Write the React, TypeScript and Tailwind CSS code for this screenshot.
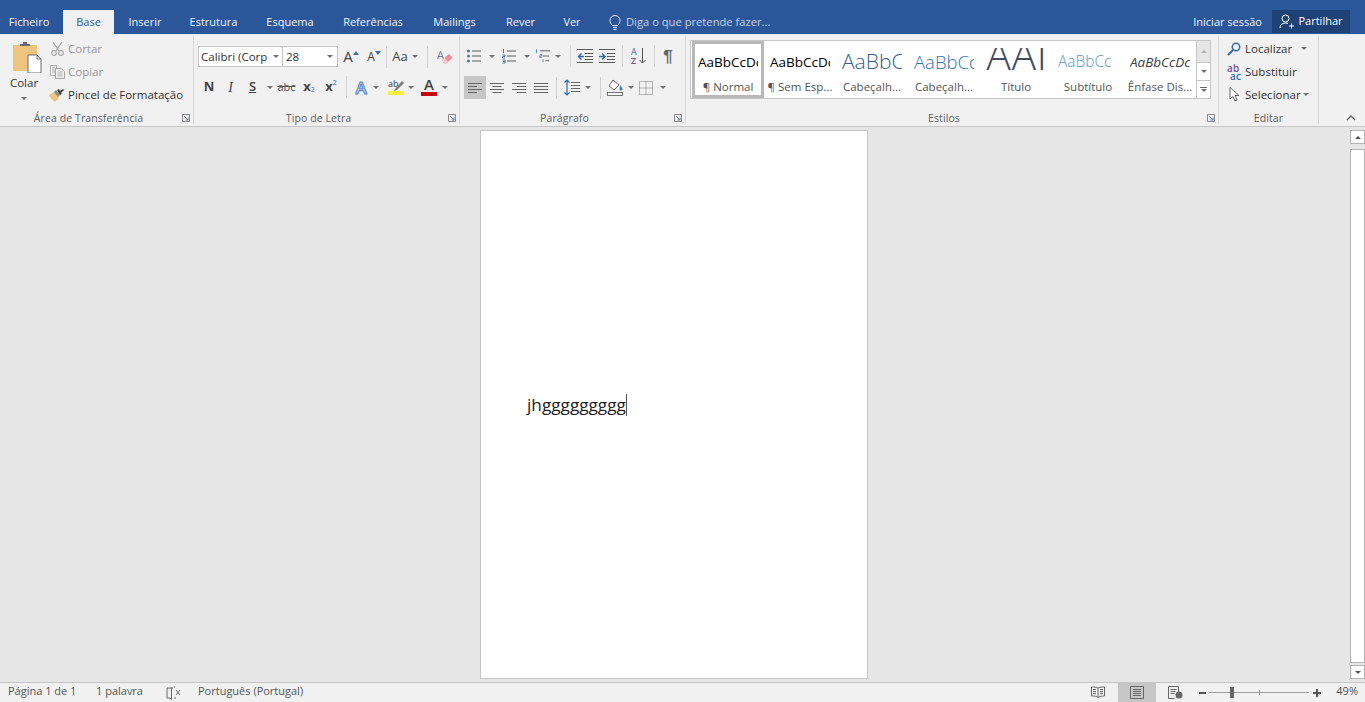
import type { ReactNode } from 'react';

const tabs = [
  { label: 'Ficheiro', w: 'w-[58px]' },
  { label: 'Base', w: 'w-[51px] ml-[5px]', active: true },
  { label: 'Inserir', w: 'w-[62px]' },
  { label: 'Estrutura', w: 'w-[75px]' },
  { label: 'Esquema', w: 'w-[78px]' },
  { label: 'Referências', w: 'w-[88px]' },
  { label: 'Mailings', w: 'w-[75px]' },
  { label: 'Rever', w: 'w-[57px]' },
  { label: 'Ver', w: 'w-[46px]' },
];

function Caret({ className = 'text-[#707070]' }: { className?: string }) {
  return (
    <svg width="6" height="3" viewBox="0 0 6 3" className={`shrink-0 ${className}`}>
      <path d="M0 0h6L3 3z" fill="currentColor" />
    </svg>
  );
}

function Sep({ h = 'h-[22px]' }: { h?: string }) {
  return <div className={`w-px shrink-0 bg-[#d2d2d2] ${h}`} />;
}

// fixed-width cell so ribbon icons land on the same columns
function Cell({ w, children, className = '' }: { w: string; children?: ReactNode; className?: string }) {
  return <div className={`flex h-full shrink-0 items-center justify-center ${w} ${className}`}>{children}</div>;
}

function Launcher() {
  return (
    <svg width="8" height="8" viewBox="0 0 8 8" className="absolute bottom-[2px] right-[3px]">
      <path d="M.5 7.5v-7h7v7z" fill="none" stroke="#8a8a8a" />
      <path d="M2 2l4 4M6 3.5V6H3.5" fill="none" stroke="#5f7fa8" />
    </svg>
  );
}

function Group({ w, label, launcher = true, children }: { w: string; label: string; launcher?: boolean; children: ReactNode }) {
  return (
    <div className={`relative flex h-[88px] shrink-0 flex-col border-r border-[#d6d6d6] ${w}`}>
      <div className="relative min-h-0 flex-1">{children}</div>
      <div className={`h-[13px] text-center text-[10.5px] leading-[14px] tracking-[0.1px] text-[#5e5e5e] ${launcher ? 'pr-[16px]' : ''}`}>{label}</div>
      {launcher && <Launcher />}
    </div>
  );
}

function ListLines({ x = 6, w = 9 }: { x?: number; w?: number }) {
  return <path d={`M${x} 3h${w}M${x} 8h${w}M${x} 13h${w}`} stroke="#5a5a5a" fill="none" />;
}

function Bullets() {
  return (
    <svg width="16" height="16" viewBox="0 0 16 16">
      <ListLines />
      <circle cx="2.5" cy="3" r="1.5" fill="#4a78ad" />
      <circle cx="2.5" cy="8" r="1.5" fill="#4a78ad" />
      <circle cx="2.5" cy="13" r="1.5" fill="#4a78ad" />
    </svg>
  );
}

function Numbers() {
  return (
    <svg width="16" height="16" viewBox="0 0 16 16">
      <ListLines />
      <path d="M2.5 1v4M1.5 7H4v1.5H1.5V10H4M1.5 12H4v3H1.5M2 13.5h2" stroke="#3f6ea6" fill="none" strokeWidth=".9" />
    </svg>
  );
}

function Multi() {
  return (
    <svg width="17" height="16" viewBox="0 0 17 16">
      <path d="M5 2.5h11M8 8h7M11 13h4" stroke="#5a5a5a" fill="none" />
      <path d="M1.5 1v4M5 6.5h2V8H5v1.5h2M8.5 11.5v3" stroke="#3f6ea6" fill="none" strokeWidth=".9" />
    </svg>
  );
}

function IndentIcon({ dir }: { dir: 'in' | 'out' }) {
  return (
    <svg width="16" height="14" viewBox="0 0 16 14">
      <path d="M0 .5h16M8 4.5h8M8 7.5h8M8 10.5h8M0 13.5h16" stroke="#5a5a5a" fill="none" />
      {dir === 'out' ? (
        <path d="M7 7.5H2M4.5 4.5l-3 3 3 3" stroke="#2f6bb3" strokeWidth="1.5" fill="none" />
      ) : (
        <path d="M0 7.5h5M3 4.5l3 3-3 3" stroke="#2f6bb3" strokeWidth="1.5" fill="none" />
      )}
    </svg>
  );
}

function Sort() {
  return (
    <svg width="16" height="18" viewBox="0 0 16 18">
      <text x="0" y="8" fontSize="9" fontFamily="Open Sans, sans-serif" fill="#3f6ea6">A</text>
      <text x="0" y="17" fontSize="9" fontFamily="Open Sans, sans-serif" fontWeight="600" fill="#8a4f9e">Z</text>
      <path d="M11.5 1v15M8.5 13l3 3 3-3" stroke="#555" fill="none" />
    </svg>
  );
}

function Align({ kind }: { kind: 'left' | 'center' | 'right' | 'justify' }) {
  const rows = {
    left: 'M1 2.5h14M1 5.5h9M1 8.5h14M1 11.5h9',
    center: 'M1 2.5h14M3.5 5.5h9M1 8.5h14M3.5 11.5h9',
    right: 'M1 2.5h14M6 5.5h9M1 8.5h14M6 11.5h9',
    justify: 'M1 2.5h14M1 5.5h14M1 8.5h14M1 11.5h14',
  };
  return (
    <svg width="16" height="14" viewBox="0 0 16 14">
      <path d={rows[kind]} stroke="#666" fill="none" />
    </svg>
  );
}

function LineSpacing() {
  return (
    <svg width="16" height="17" viewBox="0 0 16 17">
      <path d="M7 3.5h9M7 6.5h9M7 9.5h9M7 12.5h9" stroke="#666" fill="none" />
      <path d="M3 1v15M.5 3.5L3 1l2.5 2.5M.5 13.5L3 16l2.5-2.5" stroke="#2f6bb3" strokeWidth="1.2" fill="none" />
    </svg>
  );
}

function Shading() {
  return (
    <svg width="17" height="17" viewBox="0 0 17 17">
      <path d="M6 1l6 5-5 5-5-4z" fill="#fff" stroke="#666" />
      <path d="M13 6c1.5 2 2.5 3 2.5 4s-1 1.500-1.500 1.500-1.500-.5-1.500-1.500.5-2 .5-4z" fill="#3f7fc0" />
      <rect x=".5" y="13.5" width="15" height="3" fill="#f4f4f4" stroke="#777" />
    </svg>
  );
}

function Borders() {
  return (
    <svg width="14" height="14" viewBox="0 0 14 14">
      <path d="M.5.5h13v13H.5zM7 .5v13M.5 7h13" stroke="#777" strokeDasharray="1 1" fill="none" />
    </svg>
  );
}

function Paste() {
  return (
    <svg width="29" height="31" viewBox="0 0 29 31">
      <rect x="0" y="3" width="24" height="26" rx="1" fill="#eec57f" />
      <path d="M7 4V2h3V0h4v2h3v2z" fill="#6b6b6b" />
      <path d="M15 13h9l4 4v14H15z" fill="#fff" stroke="#6e6e6e" />
      <path d="M24 13v4h4" fill="none" stroke="#6e6e6e" />
    </svg>
  );
}

function Scissors() {
  return (
    <svg width="15" height="15" viewBox="0 0 15 15">
      <path d="M3 1l6 9M12 1L6 10" stroke="#a8a8a8" strokeWidth="1.3" fill="none" />
      <circle cx="4" cy="12" r="2.3" fill="none" stroke="#a8a8a8" strokeWidth="1.2" />
      <circle cx="11" cy="12" r="2.3" fill="none" stroke="#a8a8a8" strokeWidth="1.2" />
    </svg>
  );
}

function CopyIcon() {
  return (
    <svg width="15" height="14" viewBox="0 0 15 14">
      <path d="M.5.5h6v10h-6zM2 3h3M2 5h3M2 7h3" stroke="#b0b0b0" fill="none" />
      <path d="M5.5 3.5h6l3 3v7h-9z" fill="#f1f1f1" stroke="#a5a5a5" />
      <path d="M7.5 7h5M7.5 9h5M7.5 11h5" stroke="#b0b0b0" />
    </svg>
  );
}

function Brush() {
  return (
    <svg width="16" height="14" viewBox="0 0 16 14">
      <path d="M0 7l5-3 5 6-4 4C4 12 1 10 0 7z" fill="#eec57f" />
      <path d="M5 4l2-2 4 5-2 2z" fill="#8a8a8a" />
      <path d="M8 2l2-1 1 2 3-2 1 1-3 3 1 1-2 1z" fill="#3d3d3d" />
    </svg>
  );
}

function Eraser() {
  return (
    <svg width="16" height="16" viewBox="0 0 16 16" className="shrink-0">
      <text x="0" y="10" fontSize="11" fontFamily="Open Sans, sans-serif" fill="#7d7d9c">A</text>
      <path d="M5 11l7-6 3.5 3.5-6 6H7z" fill="#ea8e98" />
      <path d="M5 11l2.5-2.2 3.3 3.7-1.3 2H7z" fill="#f4c7cc" />
    </svg>
  );
}

function TextEffect() {
  return <span className="text-[17px] font-semibold leading-none text-[#dfeaf6] [-webkit-text-stroke:1px_#4d82bd]">A</span>;
}

function Highlight() {
  return (
    <svg width="17" height="16" viewBox="0 0 17 16">
      <text x="0" y="8" fontSize="9" fontFamily="Open Sans, sans-serif" fill="#444">ab</text>
      <path d="M7 10l7-8 2 2-7 7-3 1z" fill="#7b7b7b" />
      <rect x="0" y="12" width="16" height="4" fill="#ffef3a" />
    </svg>
  );
}

function FontColor() {
  return (
    <div className="flex w-[16px] flex-col items-center">
      <span className="h-[13px] text-[15px] font-semibold leading-[13px] text-[#444]">A</span>
      <div className="mt-[1px] h-[4px] w-[16px] bg-[#c8000b]" />
    </div>
  );
}

function Magnifier() {
  return (
    <svg width="14" height="14" viewBox="0 0 14 14">
      <circle cx="9" cy="5" r="3.7" fill="#eaf2fa" stroke="#3f6ea6" strokeWidth="1.5" />
      <path d="M6 8l-5 5" stroke="#3f6ea6" strokeWidth="2.2" />
    </svg>
  );
}

function Cursor() {
  return (
    <svg width="11" height="15" viewBox="0 0 11 15">
      <path d="M1 .5V12l3-2.5 2 4.5 2-1-2-4.500h4z" fill="#fff" stroke="#666" />
    </svg>
  );
}

function SmallLabel({ children, className = '' }: { children: ReactNode; className?: string }) {
  return <span className={`whitespace-nowrap text-[11.5px] leading-none ${className}`}>{children}</span>;
}

function ClipboardGroup() {
  return (
    <Group w="w-[194px]" label="Área de Transferência">
      <div className="flex h-full">
        <div className="flex w-[48px] shrink-0 flex-col items-center pt-[6px]">
          <div className="ml-[6px]"><Paste /></div>
          <div className="mt-[2px] text-[11.5px] leading-[15px] text-[#333]">Colar</div>
          <div className="mt-[7px]"><Caret /></div>
        </div>
        <div className="flex flex-col pt-[1px]">
          {[
            { icon: <Scissors />, text: 'Cortar', color: 'text-[#9c9c9c]' },
            { icon: <CopyIcon />, text: 'Copiar', color: 'text-[#9c9c9c]' },
            { icon: <Brush />, text: 'Pincel de Formatação', color: 'text-[#333]' },
          ].map(r => (
            <div key={r.text} className="flex h-[23px] items-center">
              <div className="flex w-[20px] shrink-0 justify-center pr-[2px]">{r.icon}</div>
              <SmallLabel className={r.color}>{r.text}</SmallLabel>
            </div>
          ))}
        </div>
      </div>
    </Group>
  );
}

function FontGroup() {
  return (
    <Group w="w-[266px]" label="Tipo de Letra">
      <div className="mt-[10px] flex h-[21px] items-center pl-[4px]">
        <div className="flex h-[21px] w-[85px] shrink-0 items-center justify-between border border-[#c6c6c6] bg-white pl-[2px] pr-[3px]">
          <SmallLabel className="text-[#333]">Calibri (Corp</SmallLabel>
          <Caret />
        </div>
        <div className="ml-[-1px] flex h-[21px] w-[56px] shrink-0 items-center justify-between border border-[#c6c6c6] bg-white pl-[3px] pr-[4px]">
          <SmallLabel className="text-[#333]">28</SmallLabel>
          <Caret />
        </div>
        <Cell w="w-[26px]">
          <span className="text-[15px] leading-none text-[#444]">A</span>
          <svg width="6" height="4" className="mb-[8px]"><path d="M0 4l3-4 3 4z" fill="#3f6ea6" /></svg>
        </Cell>
        <Cell w="w-[20px]">
          <span className="text-[12px] leading-none text-[#444]">A</span>
          <svg width="6" height="4" className="mb-[8px]"><path d="M0 0l3 4 3-4z" fill="#3f6ea6" /></svg>
        </Cell>
        <Cell w="w-[4px]"><Sep /></Cell>
        <Cell w="w-[24px]"><span className="text-[13px] text-[#444]">Aa</span></Cell>
        <Cell w="w-[6px]"><Caret /></Cell>
        <Cell w="w-[19px]"><Sep /></Cell>
        <Cell w="w-[16px]"><Eraser /></Cell>
      </div>
      <div className="mt-[9px] flex h-[22px] items-center pl-[4px]">
        <Cell w="w-[22px]"><span className="text-[13px] font-bold text-[#444]">N</span></Cell>
        <Cell w="w-[21px]"><span className="font-['Liberation_Serif',serif] text-[14px] italic text-[#444]">I</span></Cell>
        <Cell w="w-[23px]"><span className="text-[13px] font-semibold text-[#444] underline">S</span></Cell>
        <Cell w="w-[11px]"><Caret /></Cell>
        <Cell w="w-[23px]"><span className="text-[11px] text-[#555] line-through">abc</span></Cell>
        <Cell w="w-[22px]"><span className="text-[13px] font-bold text-[#444]">x</span><span className="mt-[7px] text-[7px] text-[#3f6ea6]">2</span></Cell>
        <Cell w="w-[22px]"><span className="text-[13px] font-bold text-[#444]">x</span><span className="mb-[7px] text-[7px] text-[#3f6ea6]">2</span></Cell>
        <Cell w="w-[8px]"><Sep /></Cell>
        <Cell w="w-[22px]"><TextEffect /></Cell>
        <Cell w="w-[8px]"><Caret /></Cell>
        <Cell w="w-[24px]" className="ml-[4px]"><Highlight /></Cell>
        <Cell w="w-[6px]"><Caret /></Cell>
        <Cell w="w-[16px]" className="ml-[7px]"><FontColor /></Cell>
        <Cell w="w-[8px]" className="ml-[4px]"><Caret /></Cell>
      </div>
    </Group>
  );
}

function ParagraphGroup() {
  return (
    <Group w="w-[226px]" label="Parágrafo">
      <div className="mt-[9px] flex h-[22px] items-center pl-[5px]">
        <Cell w="w-[18px]"><Bullets /></Cell>
        <Cell w="w-[17px]"><Caret /></Cell>
        <Cell w="w-[18px]"><Numbers /></Cell>
        <Cell w="w-[17px]"><Caret /></Cell>
        <Cell w="w-[16px]"><Multi /></Cell>
        <Cell w="w-[14px]"><Caret /></Cell>
        <Cell w="w-[10px]"><Sep /></Cell>
        <Cell w="w-[20px]"><IndentIcon dir="out" /></Cell>
        <Cell w="w-[24px]"><IndentIcon dir="in" /></Cell>
        <Cell w="w-[6px]"><Sep /></Cell>
        <Cell w="w-[27px]"><Sort /></Cell>
        <Cell w="w-[4px]"><Sep /></Cell>
        <Cell w="w-[12px]" className="ml-[6px]"><span className="font-['Liberation_Sans',sans-serif] text-[17px] font-bold leading-none text-[#666]">¶</span></Cell>
      </div>
      <div className="mt-[9px] flex h-[23px] items-center pl-[4px]">
        <Cell w="w-[22px]" className="bg-[#c6c6c6]"><Align kind="left" /></Cell>
        <Cell w="w-[22px]"><Align kind="center" /></Cell>
        <Cell w="w-[22px]"><Align kind="right" /></Cell>
        <Cell w="w-[22px]"><Align kind="justify" /></Cell>
        <Cell w="w-[8px]"><Sep /></Cell>
        <Cell w="w-[20px]" className="ml-[2px]"><LineSpacing /></Cell>
        <Cell w="w-[11px]"><Caret /></Cell>
        <Cell w="w-[14px]"><Sep /></Cell>
        <Cell w="w-[17px]"><Shading /></Cell>
        <Cell w="w-[13px]"><Caret /></Cell>
        <Cell w="w-[18px]"><Borders /></Cell>
        <Cell w="w-[12px]" className="ml-[2px]"><Caret /></Cell>
      </div>
    </Group>
  );
}

const styles = [
  { name: '¶ Normal', preview: 'AaBbCcDc', cls: 'text-[13.5px] text-black', selected: true },
  { name: '¶ Sem Esp...', preview: 'AaBbCcDc', cls: 'text-[13.5px] text-black' },
  { name: 'Cabeçalh...', preview: 'AaBbCc', cls: 'text-[21px] font-light text-[#2f5f8f]' },
  { name: 'Cabeçalh...', preview: 'AaBbCc', cls: 'text-[18.5px] font-light text-[#2e74b5]' },
  { name: 'Título', preview: 'AAI', cls: 'mb-[7px] h-[22px] text-[42px] font-light leading-[13px] text-[#3f4d5f]' },
  { name: 'Subtítulo', preview: 'AaBbCc', cls: 'text-[15.5px] font-light text-[#5a9bc5]' },
  { name: 'Ênfase Dis...', preview: 'AaBbCcDc', cls: 'text-[13.5px] italic text-[#404040]' },
];

function StyleGallery() {
  return (
    <Group w="w-[533px]" label="Estilos">
      <div className="ml-[4px] mt-[4px] flex h-[59px] w-[521px] border border-[#c6c6c6] bg-white">
        <div className="flex flex-1 pl-[1px]">
          {styles.map((s, i) => (
            <div
              key={i}
              className={`flex h-[57px] w-[72px] shrink-0 flex-col items-center overflow-hidden ${s.selected ? 'border-[3px] border-[#b8b8b8]' : 'pt-[3px]'}`}
            >
              <div className="flex h-[36px] w-[60px] shrink-0 items-center overflow-hidden whitespace-nowrap">
                <span className={`block overflow-hidden ${s.cls}`}>{s.preview}</span>
              </div>
              <SmallLabel className="mt-[1px] text-[#555]">{s.name}</SmallLabel>
            </div>
          ))}
        </div>
        <div className="flex w-[14px] shrink-0 flex-col border-l border-[#c6c6c6]">
          <div className="flex h-[21px] items-center justify-center bg-[#e6e6e6]">
            <Caret className="rotate-180 text-[#b0b0b0]" />
          </div>
          <div className="flex h-[19px] items-center justify-center border-y border-[#c6c6c6]"><Caret /></div>
          <div className="flex flex-1 flex-col items-center justify-center gap-[1px]">
            <div className="h-px w-[7px] bg-[#666]" />
            <Caret />
          </div>
        </div>
      </div>
    </Group>
  );
}

function EditGroup() {
  const rows = [
    { icon: <Magnifier />, text: 'Localizar', caret: 'ml-[9px]' },
    {
      icon: (
        <div className="flex flex-col text-[10px] font-semibold leading-[8px]">
          <span className="text-[#7a4f9e]">ab</span>
          <span className="ml-[3px] text-[#2f6bb3]">ac</span>
        </div>
      ),
      text: 'Substituir',
    },
    { icon: <Cursor />, text: 'Selecionar', caret: 'ml-[2px]' },
  ];
  return (
    <Group w="w-[100px]" label="Editar" launcher={false}>
      <div className="flex flex-col pl-[7px] pt-[1px]">
        {rows.map(r => (
          <div key={r.text} className="flex h-[23px] items-center">
            <div className="flex w-[19px] shrink-0 justify-center pr-[3px]">{r.icon}</div>
            <SmallLabel className="text-[#333]">{r.text}</SmallLabel>
            {r.caret && <div className={r.caret}><Caret /></div>}
          </div>
        ))}
      </div>
    </Group>
  );
}

function ScrollBar() {
  return (
    <div className="flex w-[15px] shrink-0 flex-col pb-[3px] pt-[3px]">
      <div className="flex h-[14px] items-center justify-center border border-[#b5b5b5] bg-white">
        <Caret className="rotate-180 text-[#555]" />
      </div>
      <div className="mt-[5px] flex-1 border border-[#b5b5b5] bg-white" />
      <div className="mt-[2px] flex h-[14px] items-center justify-center border border-[#b5b5b5] bg-white">
        <Caret className="text-[#555]" />
      </div>
    </div>
  );
}

export default function App() {
  return (
    <div className="flex h-[702px] w-[1365px] flex-col overflow-hidden bg-[#e6e6e6] font-['Open_Sans',sans-serif]">
      {/* Title / tabs */}
      <div className="flex h-[34px] shrink-0 items-end bg-[#2b579a] text-white">
        {tabs.map(t => (
          <div
            key={t.label}
            className={`flex h-[24px] items-center justify-center text-[11px] ${t.w} ${t.active ? 'bg-[#f1f1f1] text-[#2b579a]' : 'text-[#f2f5fa]'}`}
          >
            {t.label}
          </div>
        ))}
        <div className="ml-[14px] flex h-[24px] items-center gap-[5px] text-[11.2px] text-[#c4d2e8]">
          <svg width="12" height="15" viewBox="0 0 12 15">
            <path d="M3.5 10.5C2 9 1 7.5 1 5.5a5 5 0 0110 0c0 2-1 3.5-2.5 5zM4 12.5h4M4.5 14.5h3" fill="none" stroke="#dde6f3" />
          </svg>
          <span>Diga o que pretende fazer...</span>
        </div>
        <div className="flex-1" />
        <div className="flex h-[24px] items-center text-[11px] text-[#f2f5fa]">Iniciar sessão</div>
        <div className="mb-[1px] ml-[10px] mr-[15px] flex h-[23px] w-[78px] items-center justify-center gap-[4px] bg-[#1e4276] text-[11px]">
          <svg width="15" height="15" viewBox="0 0 15 15">
            <circle cx="6.5" cy="4.5" r="3.5" fill="none" stroke="#fff" />
            <path d="M1 14c0-3 2-5 5.5-5 1 0 2 .2 2.500.6M10 12h5M12.5 9.500v5" fill="none" stroke="#fff" />
          </svg>
          <span>Partilhar</span>
        </div>
      </div>

      {/* Ribbon */}
      <div className="flex h-[93px] shrink-0 items-start border-b border-[#c6c6c6] bg-[#f1f1f1] pt-[2px]">
        <ClipboardGroup />
        <FontGroup />
        <ParagraphGroup />
        <StyleGallery />
        <EditGroup />
        <div className="flex h-[88px] flex-1 items-end justify-center pb-[3px]">
          <svg width="10" height="6" viewBox="0 0 10 6" className="ml-[18px]">
            <path d="M1 5l4-4 4 4" fill="none" stroke="#666" strokeWidth="1.4" />
          </svg>
        </div>
      </div>

      {/* Document area */}
      <div className="flex min-h-0 flex-1">
        <div className="flex flex-1 justify-center pr-[2px] pt-[3px]">
          <div className="h-[549px] w-[388px] border border-[#c6c6c6] bg-white pl-[46px] pt-[262px]">
            <div className="flex items-center">
              <span className="text-[17.2px] leading-[24px] text-[#222]">jhggggggggg</span>
              <div className="h-[22px] w-px bg-[#555]" />
            </div>
          </div>
        </div>
        <ScrollBar />
      </div>

      {/* Status bar */}
      <div className="flex h-[20px] shrink-0 items-center border-t border-[#c6c6c6] bg-[#f1f1f1] text-[11px] text-[#555]">
        <span className="ml-[8px] mt-[-2px] w-[88px]">Página 1 de 1</span>
        <span className="mt-[-2px] w-[70px]">1 palavra</span>
        <svg width="15" height="14" viewBox="0 0 15 14" className="mr-[17px]">
          <path d="M6.5 2H1v10h3l1.5 1.5V2zM8 1h1M8 12h2" fill="none" stroke="#666" />
          <path d="M10 4l4 5M14 4l-4 5" stroke="#666" />
        </svg>
        <span className="mt-[-2px]">Português (Portugal)</span>
        <div className="flex-1" />
        <svg width="14" height="13" viewBox="0 0 14 13" className="mr-[13px]">
          <path d="M7 2C5 1 3 1 .5 1v9c3 0 5 0 6.5 1.5C8.5 10 11 10 13.5 10V1C11 1 9 1 7 2zM7 2v9.5M2 3.5h3M2 5.5h3M2 7.5h3M9 3.5h3M9 5.5h3M9 7.5h3" fill="none" stroke="#666" />
        </svg>
        <div className="flex h-[19px] w-[38px] items-center justify-center bg-[#c6c6c6]">
          <svg width="14" height="13" viewBox="0 0 14 13">
            <path d="M.5.5h13v12H.5zM3 3.5h8M3 5.5h8M3 7.5h8M3 9.5h8" fill="none" stroke="#666" />
          </svg>
        </div>
        <svg width="15" height="13" viewBox="0 0 15 13" className="ml-[12px]">
          <path d="M.5.5h10v8M.5.5v12h6M2.5 3.5h6M2.5 5.5h5M2.5 7.5h4" fill="none" stroke="#666" />
          <circle cx="11" cy="9" r="3.5" fill="#666" />
        </svg>
        <span className="ml-[16px] h-[2px] w-[7px] bg-[#555]" />
        <div className="relative ml-[3px] h-px w-[100px] bg-[#a0a0a0]">
          <div className="absolute left-[21px] top-[-5px] h-[11px] w-[4px] bg-[#666]" />
          <div className="absolute left-[50px] top-[-2px] h-[5px] w-px bg-[#a0a0a0]" />
        </div>
        <svg width="8" height="8" viewBox="0 0 8 8" className="ml-[4px]">
          <path d="M0 4h8M4 0v8" stroke="#555" strokeWidth="2" />
        </svg>
        <span className="ml-[15px] mr-[7px] mt-[-2px] w-[22px] text-right">49%</span>
      </div>
    </div>
  );
}
